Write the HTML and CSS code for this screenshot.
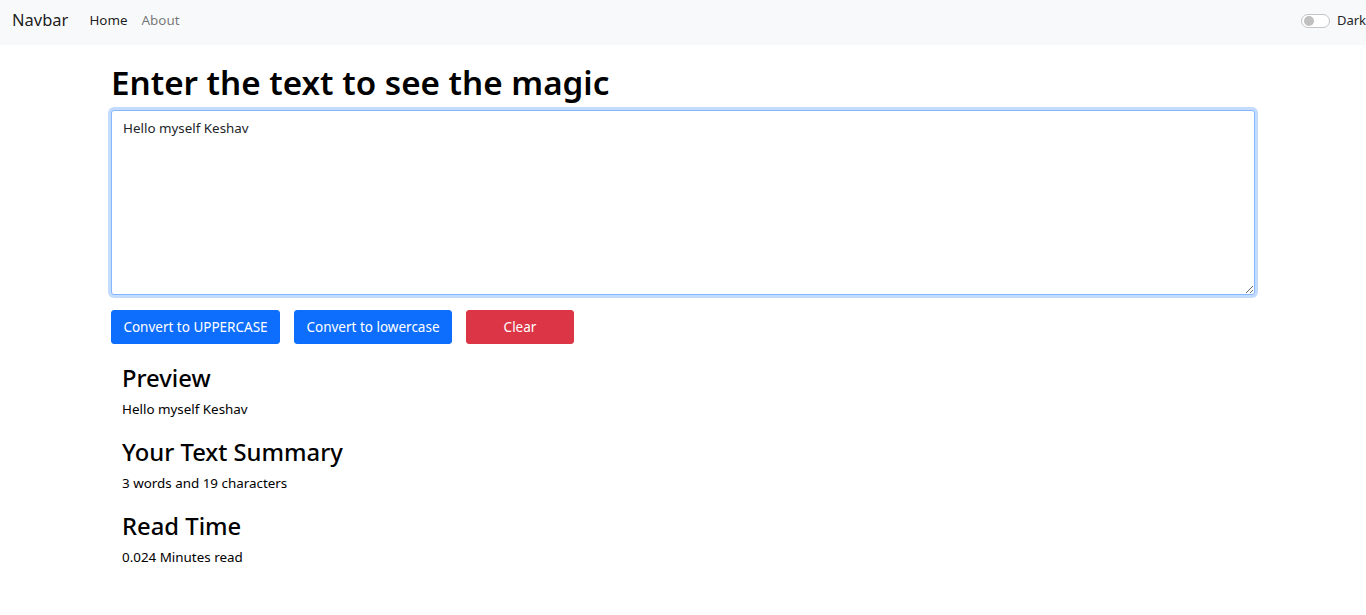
FILE: index.html
```html
<!DOCTYPE html>
<html lang="en">
<head>
<meta charset="utf-8">
<title>TextUtils</title>
<link rel="stylesheet" href="styles.css">
</head>
<body>
<nav class="navbar">
  <a class="brand" href="#">Navbar</a>
  <ul class="nav-links">
    <li><a class="nav-link active" href="#">Home</a></li>
    <li><a class="nav-link" href="#">About</a></li>
  </ul>
  <label class="switch">
    <span class="switch-track"><span class="switch-knob"></span></span>
    <span class="switch-label">Dark</span>
  </label>
</nav>

<main class="container">
  <h1 class="title">Enter the text to see the magic</h1>
  <textarea class="text-box" rows="8">Hello myself Keshav</textarea>
  <div class="actions">
    <button class="btn btn-primary btn-upper">Convert to UPPERCASE</button>
    <button class="btn btn-primary btn-lower">Convert to lowercase</button>
    <button class="btn btn-danger btn-clear">Clear</button>
  </div>
</main>

<section class="summary">
  <h2>Preview</h2>
  <p>Hello myself Keshav</p>
  <h2>Your Text Summary</h2>
  <p>3 words and 19 characters</p>
  <h2>Read Time</h2>
  <p>0.024 Minutes read</p>
</section>
</body>
</html>
```
FILE: styles.css
```css
html, body {
  margin: 0;
  padding: 0;
  overflow-x: hidden;
}
body {
  font-family: "Segoe UI", "Noto Sans", "Open Sans", sans-serif;
  font-size: 13.4px;
  line-height: 1.5;
  color: #212529;
  background: #fff;
}
.navbar {
  height: 45px;
  background: #f8f9fa;
  display: flex;
  align-items: center;
  padding: 0 0 4px 12px;
  box-sizing: border-box;
  white-space: nowrap;
}
.brand {
  font-size: 16.5px;
  color: rgba(0, 0, 0, .9);
  text-decoration: none;
  margin-right: 21px;
}
.nav-links {
  list-style: none;
  margin: 0;
  padding: 0;
  display: flex;
  gap: 14px;
  flex: 1;
}
.nav-link {
  font-size: 13.4px;
  color: rgba(0, 0, 0, .55);
  text-decoration: none;
}
.nav-link.active {
  color: rgba(0, 0, 0, .9);
}
.switch {
  display: flex;
  align-items: center;
  gap: 7px;
}
.switch-track {
  flex: none;
  width: 27px;
  height: 12px;
  border: 1px solid #c4c4c4;
  border-radius: 8px;
  background: #fff;
  position: relative;
}
.switch-knob {
  position: absolute;
  left: 2px;
  top: 1px;
  width: 10px;
  height: 10px;
  border-radius: 50%;
  background: #c0c0c0;
}
.switch-label {
  font-size: 13px;
  color: #212529;
}
.container {
  padding: 19px 0 0 111px;
  width: 1144px;
}
.title {
  font-size: 33.2px;
  font-weight: 600;
  line-height: 38px;
  margin: 0 0 8px;
  color: #000;
}
.text-box {
  display: block;
  box-sizing: border-box;
  width: 1144px;
  height: 185px;
  margin: 0 0 15px;
  padding: 8px 11px;
  font-family: inherit;
  font-size: 13.4px;
  line-height: 19px;
  color: #212529;
  border: 1px solid #86b7fe;
  border-radius: 3px;
  box-shadow: 0 0 0 3px rgba(13, 110, 253, .25);
  outline: none;
  resize: vertical;
}
.actions {
  display: flex;
  gap: 14px;
}
.btn {
  height: 34px;
  border: 1px solid transparent;
  border-radius: 3px;
  font-family: inherit;
  font-size: 13.5px;
  color: #fff;
  padding: 0;
  text-align: center;
}
.btn-primary {
  background: #0d6efd;
  border-color: #0d6efd;
}
.btn-danger {
  background: #dc3545;
  border-color: #dc3545;
}
.btn-upper { width: 169px; }
.btn-lower { width: 158px; }
.btn-clear { width: 108px; }
.summary {
  padding: 20px 0 0 122px;
}
.summary h2 {
  font-size: 23.8px;
  font-weight: 500;
  line-height: 29px;
  margin: 0 0 7px;
  color: #000;
}
.summary p {
  margin: 0 0 19px;
  line-height: 19px;
  color: #000;
}
```
